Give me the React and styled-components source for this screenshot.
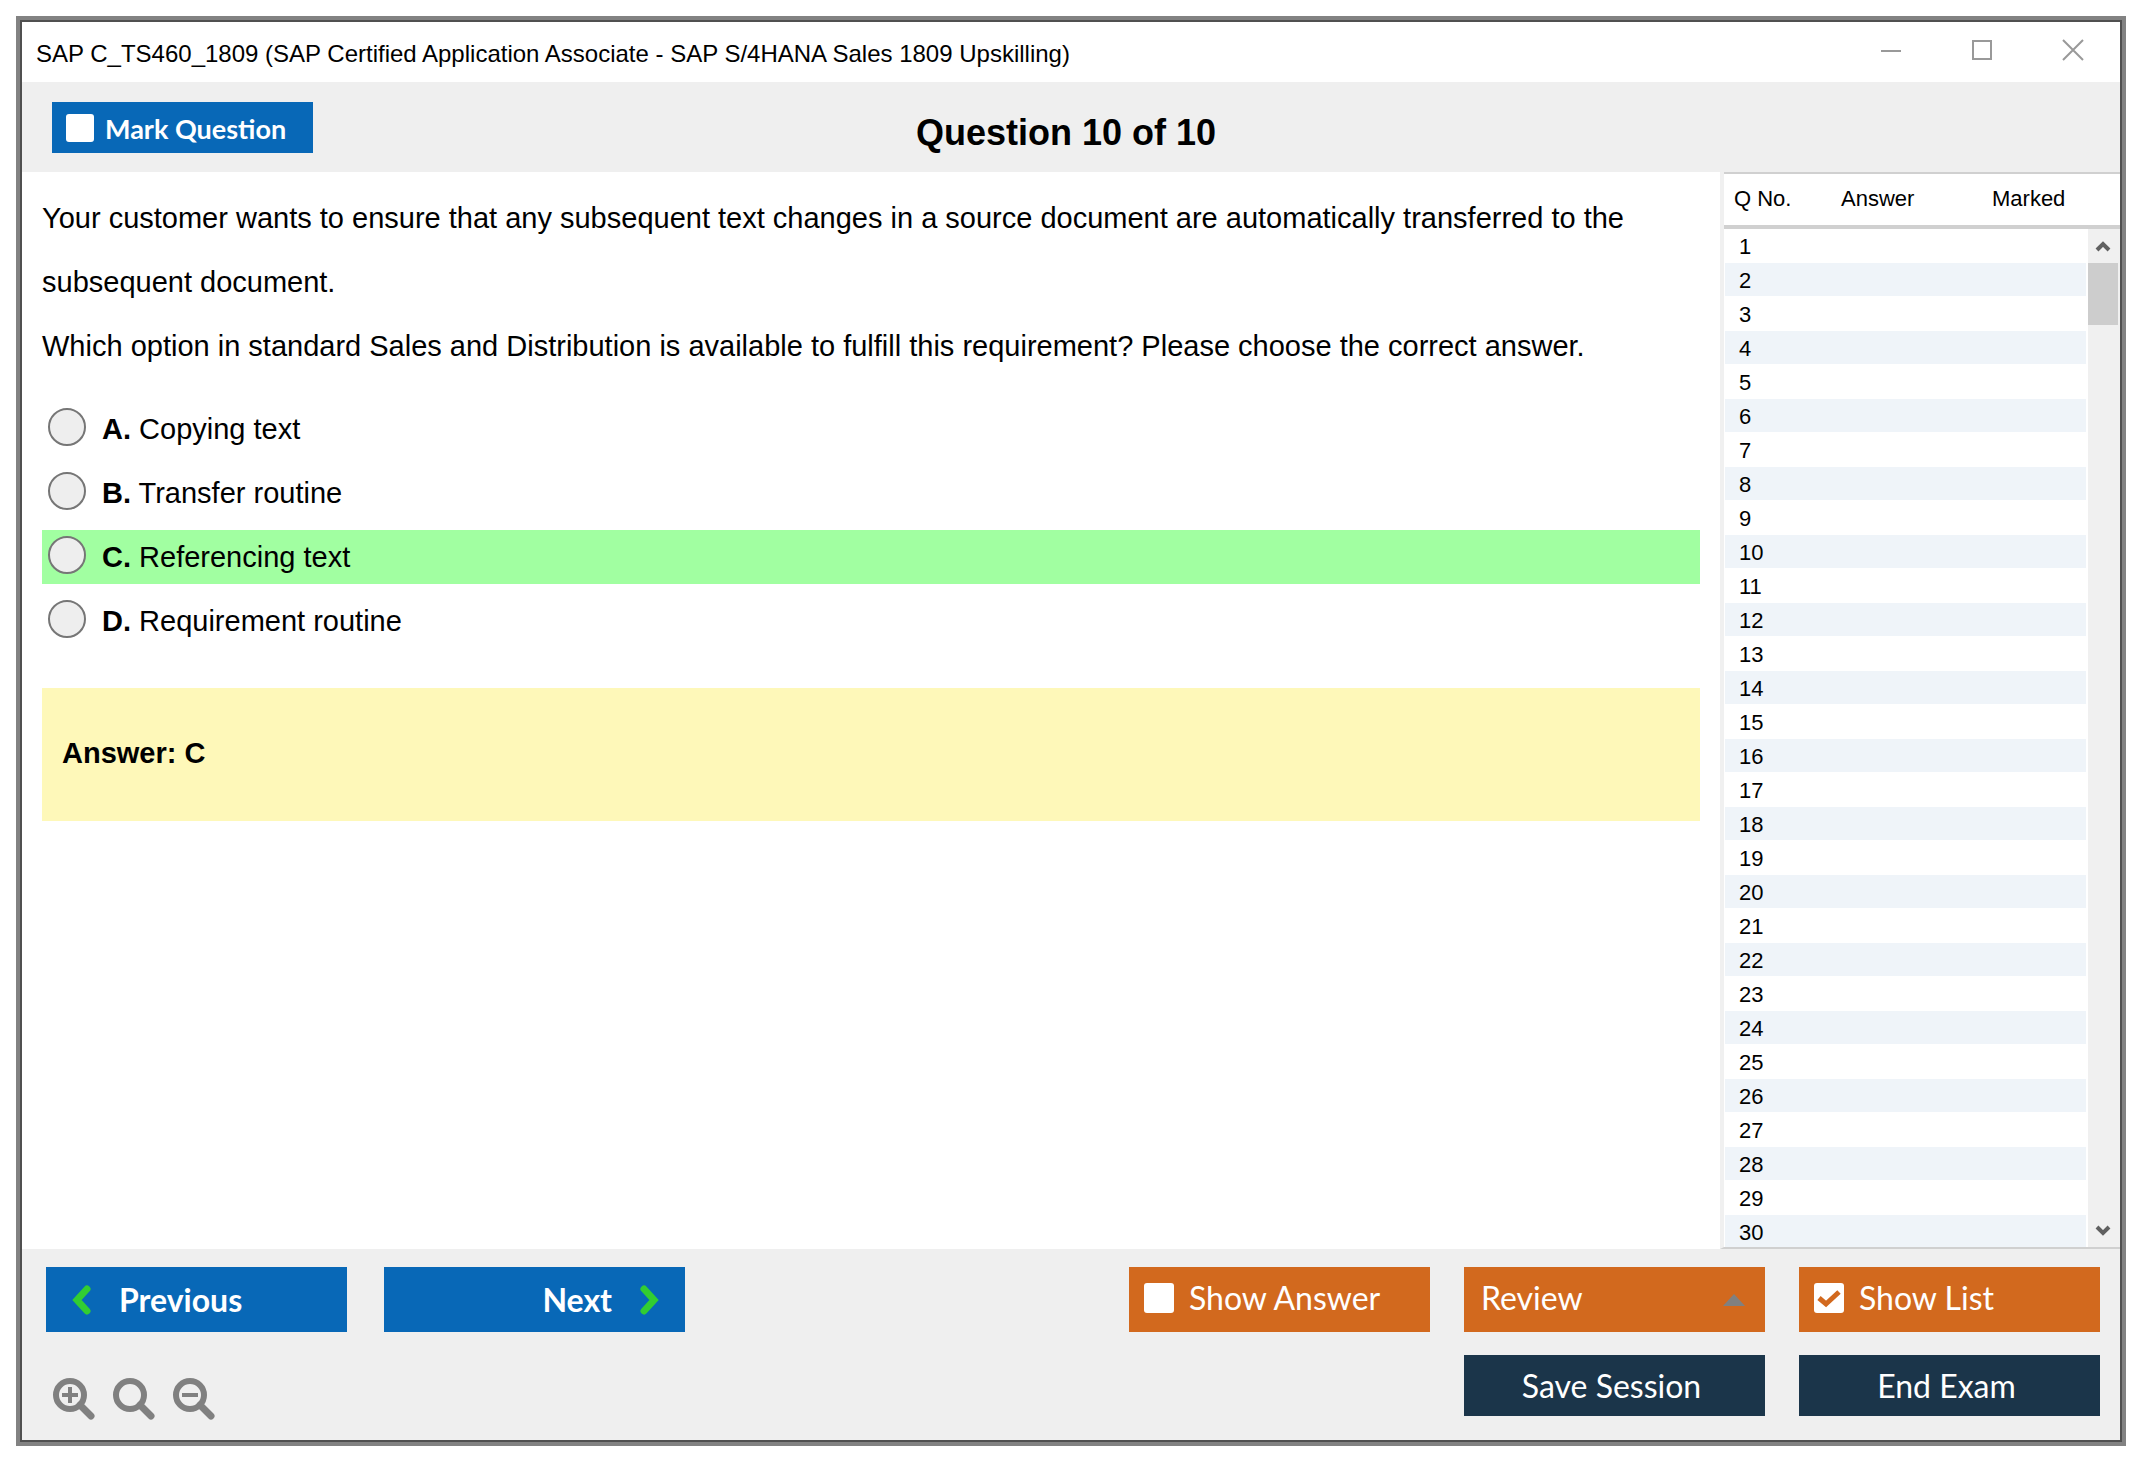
import { useState } from "react";
import styled, { createGlobalStyle } from "styled-components";

const options = [
    { letter: "A", text: "Copying text" },
    { letter: "B", text: "Transfer routine" },
    { letter: "C", text: "Referencing text" },
    { letter: "D", text: "Requirement routine" },
];

const correct = "C";

const rows = Array.from({ length: 30 }, (_, i) => i + 1);

export default function App(){
    const [marked, setMarked] = useState(false);
    const [showAnswer, setShowAnswer] = useState(false);
    const [showList, setShowList] = useState(true);

    return (
        <>
            <GlobalStyle />
            <Page>
                <Window>
                    <TitleBar>
                        <Title>SAP C_TS460_1809 (SAP Certified Application Associate - SAP S/4HANA Sales 1809 Upskilling)</Title>
                        <WindowControls>
                            <WindowButton aria-label="Minimize">
                                <svg width="22" height="22" viewBox="0 0 22 22"><path d="M1 12H21" /></svg>
                            </WindowButton>
                            <WindowButton aria-label="Maximize">
                                <svg width="22" height="22" viewBox="0 0 22 22"><path d="M2 2H20V20H2Z" /></svg>
                            </WindowButton>
                            <WindowButton aria-label="Close">
                                <svg width="22" height="22" viewBox="0 0 22 22"><path d="M1 1L21 21M21 1L1 21" /></svg>
                            </WindowButton>
                        </WindowControls>
                    </TitleBar>

                    <Header>
                        <MarkLabel>
                            <Check checked={marked} onChange={setMarked} />
                            Mark Question
                        </MarkLabel>
                        <Counter>Question 10 of 10</Counter>
                    </Header>

                    <Body>
                        <Content>
                            <Question>
                                Your customer wants to ensure that any subsequent text changes in a source document are automatically transferred to the subsequent document.
                                <br />
                                Which option in standard Sales and Distribution is available to fulfill this requirement? Please choose the correct answer.
                            </Question>
                            <Options>
                                {options.map(item => (
                                    <Option key={item.letter} $correct={item.letter === correct}>
                                        <Radio type="radio" name="option" value={item.letter} />
                                        <span><b>{item.letter}.</b> {item.text}</span>
                                    </Option>
                                ))}
                            </Options>
                            <AnswerBox>Answer: {correct}</AnswerBox>
                        </Content>

                        <ListPanel>
                            <Table>
                                <thead>
                                    <tr>
                                        <Th $width="107px">Q No.</Th>
                                        <Th $width="151px">Answer</Th>
                                        <Th>Marked</Th>
                                    </tr>
                                </thead>
                                <tbody>
                                    {rows.map(number => (
                                        <Row key={number}>
                                            <Td>{number}</Td>
                                            <Td />
                                            <Td />
                                        </Row>
                                    ))}
                                </tbody>
                            </Table>
                            <ScrollColumn>
                                <Corner />
                                <ScrollBar>
                                    <ScrollButton aria-label="Scroll up">
                                        <svg width="16" height="14" viewBox="0 0 16 14"><path d="M2 11L8 5L14 11" /></svg>
                                    </ScrollButton>
                                    <Thumb />
                                    <ScrollButton aria-label="Scroll down">
                                        <svg width="16" height="14" viewBox="0 0 16 14"><path d="M2 4L8 10L14 4" /></svg>
                                    </ScrollButton>
                                </ScrollBar>
                            </ScrollColumn>
                        </ListPanel>
                    </Body>

                    <Footer>
                        <FooterLeft>
                            <NavGroup>
                                <NavButton>
                                    <Chevron d="M15 4L5 15L15 26" />
                                    Previous
                                </NavButton>
                                <NavButton $end>
                                    Next
                                    <Chevron d="M5 4L15 15L5 26" />
                                </NavButton>
                            </NavGroup>
                            <ZoomGroup>
                                <ZoomButton label="Zoom in" sign="M10 17H26M18 9V25" />
                                <ZoomButton label="Reset zoom" />
                                <ZoomButton label="Zoom out" sign="M10 17H26" />
                            </ZoomGroup>
                        </FooterLeft>
                        <Actions>
                            <ActionLabel>
                                <Check checked={showAnswer} onChange={setShowAnswer} large />
                                Show Answer
                            </ActionLabel>
                            <SelectBox>
                                <Select aria-label="Review" defaultValue="Review">
                                    <option>Review</option>
                                </Select>
                                <Arrow width="22" height="12" viewBox="0 0 22 12"><path d="M0 12L11 0L22 12Z" /></Arrow>
                            </SelectBox>
                            <ActionLabel>
                                <Check checked={showList} onChange={setShowList} large />
                                Show List
                            </ActionLabel>
                            <SessionButton $column={2}>Save Session</SessionButton>
                            <SessionButton $column={3}>End Exam</SessionButton>
                        </Actions>
                    </Footer>
                </Window>
            </Page>
        </>
    );
}

function Check({ checked, onChange, large }){
    return (
        <CheckBox $size={large ? "30px" : "28px"}>
            <input type="checkbox" checked={checked} onChange={e => onChange(e.target.checked)} />
            {checked && <svg viewBox="0 0 30 30"><path d="M5 15L12 21L25 9" /></svg>}
        </CheckBox>
    );
}

function Chevron({ d }){
    return (
        <ChevronIcon width="20" height="30" viewBox="0 0 20 30">
            <path d={d} />
        </ChevronIcon>
    );
}

function ZoomButton({ label, sign }){
    return (
        <IconButton aria-label={label}>
            <svg width="44" height="44" viewBox="0 0 44 44">
                <circle cx="18" cy="17" r="14" strokeWidth="6" />
                <path d="M28 27L39 38" strokeWidth="7" strokeLinecap="round" />
                {sign && <path d={sign} strokeWidth="4" />}
            </svg>
        </IconButton>
    );
}

const GlobalStyle = createGlobalStyle`
    *{
        box-sizing:border-box;
    }

    body{
        margin:0;
        background:#fff;
        color:#000;
        font-family:"Liberation Sans", Arial, sans-serif;
    }

    button, select, input{
        margin:0;
        padding:0;
        border:none;
        font-family:inherit;
    }

    svg{
        display:block;
    }
`;

const Page = styled.div`
    height:100vh;
    min-height:900px;

    display:flex;

    padding:16px 24px 24px 16px;
`;

const Window = styled.main`
    flex:1;
    min-width:0;

    display:flex;
    flex-direction:column;

    border:4px solid #828282;
    outline:2px solid #505050;
    outline-offset:-6px;
    padding:2px;
`;

const TitleBar = styled.div`
    height:60px;

    display:flex;
    justify-content:space-between;
    align-items:center;

    padding:0 36px 0 14px;
`;

const Title = styled.h1`
    margin:0;
    padding-top:4px;

    font-weight:400;
    font-size:24px;
    line-height:28px;
`;

const WindowControls = styled.div`
    display:flex;
    gap:69px;

    padding-bottom:4px;
`;

const WindowButton = styled.button`
    background:none;

    path{
        fill:none;
        stroke:#999;
        stroke-width:2;
    }
`;

const Header = styled.header`
    height:90px;

    display:grid;
    grid-template-columns:1fr auto 1fr;
    align-items:center;

    padding:0 40px 0 30px;
    background:#efefef;
`;

const MarkLabel = styled.label`
    width:261px;
    height:51px;

    display:flex;
    align-items:center;
    gap:11px;

    padding:2px 0 0 14px;
    background:#0868b7;
    color:#fff;
    font-family:Lato, sans-serif;
    font-weight:700;
    font-size:27px;
`;

const CheckBox = styled.span`
    width:${props => props.$size};
    height:${props => props.$size};

    display:grid;

    input, svg{
        grid-area:1 / 1;
        width:100%;
        height:100%;
    }

    input{
        appearance:none;
        background:#fff;
        border-radius:3px;
    }

    svg{
        pointer-events:none;
    }

    path{
        fill:none;
        stroke:#d2691e;
        stroke-width:5;
    }
`;

const Counter = styled.h2`
    margin:0;
    padding-top:12px;

    font-weight:700;
    font-size:36px;
    line-height:40px;
`;

const Body = styled.div`
    flex:1;
    min-height:0;

    display:flex;
`;

const Content = styled.section`
    flex:1;
    min-width:0;

    padding:14px 20px;
    font-size:29px;
`;

const Question = styled.p`
    margin:0 0 24px;

    line-height:64px;
`;

const Options = styled.div`
    display:flex;
    flex-direction:column;
    gap:10px;
`;

const Option = styled.label`
    height:54px;

    display:flex;
    align-items:center;
    gap:16px;

    padding:0 6px;
    background:${props => props.$correct ? "#a1ffa1" : "none"};
`;

const Radio = styled.input`
    appearance:none;
    width:38px;
    height:38px;

    && {
        margin-bottom:4px;
        border:2px solid #767676;
    }
    border-radius:50%;
    background:#eee;
`;

const AnswerBox = styled.div`
    margin-top:40px;
    padding:47px 20px 49px;

    background:#fef8b9;
    font-weight:700;
    line-height:37px;
`;

const ListPanel = styled.aside`
    width:400px;

    display:flex;
    align-items:flex-start;

    overflow:hidden;
    border-left:4px solid #f0f0f0;
    border-bottom:2px solid #d0d0d0;
`;

const Table = styled.table`
    flex:1;

    table-layout:fixed;
    border-spacing:0;
    font-size:22px;
    line-height:26px;
`;

const Th = styled.th`
    width:${props => props.$width};
    height:57px;

    padding:0 0 2px 10px;
    border-top:2px solid #d0d0d0;
    border-bottom:4px solid #d0d0d0;
    font-weight:400;
    text-align:left;
`;

const Row = styled.tr`
    &:nth-child(even){
        background:#eff4f9;
    }
`;

const Td = styled.td`
    height:34px;

    padding:2px 0 0 14px;
    border-bottom:1px solid #fff;

    &:first-child{
        border-left:1px solid #fff;
    }

    &:last-child{
        border-right:2px solid #fff;
    }
`;

const ScrollColumn = styled.div`
    width:32px;

    display:flex;
    flex-direction:column;
    align-self:stretch;
`;

const Corner = styled.div`
    height:57px;

    border-top:2px solid #d0d0d0;
    border-bottom:4px solid #d0d0d0;
`;

const ScrollBar = styled.div`
    flex:1;

    display:flex;
    flex-direction:column;

    padding-right:2px;
    background:#f0f0f0;
`;

const ScrollButton = styled.button`
    height:34px;

    display:flex;
    justify-content:center;
    align-items:center;

    background:none;

    path{
        fill:none;
        stroke:#606060;
        stroke-width:4;
    }
`;

const Thumb = styled.div`
    height:62px;

    margin-bottom:auto;
    background:#cdcdcd;
`;

const Footer = styled.footer`
    height:191px;

    display:flex;
    justify-content:space-between;

    padding:18px 20px 0 24px;
    background:#efefef;
`;

const FooterLeft = styled.div`
    display:flex;
    flex-direction:column;
    gap:46px;
`;

const NavGroup = styled.div`
    display:flex;
    gap:37px;
`;

const NavButton = styled.button`
    width:301px;
    height:65px;

    display:flex;
    justify-content:${props => props.$end ? "flex-end" : "flex-start"};
    align-items:center;
    gap:27px;

    && {
        padding:0 26px;
    }
    background:#0868b7;
    color:#fff;
    font-family:Lato, sans-serif;
    font-weight:700;
    font-size:32px;
`;

const ChevronIcon = styled.svg`
    fill:none;
    stroke:#32cd32;
    stroke-width:7;
    stroke-linecap:round;
`;

const ZoomGroup = styled.div`
    display:flex;
    gap:16px;

    padding-left:6px;
`;

const IconButton = styled.button`
    background:none;

    svg{
        fill:none;
        stroke:#808080;
    }
`;

const Actions = styled.div`
    display:grid;
    grid-template-columns:repeat(3, 301px);
    grid-template-rows:65px 61px;
    gap:23px 34px;

    color:#fff;
    font-family:Lato, sans-serif;
    font-size:32px;
`;

const ActionLabel = styled.label`
    display:flex;
    align-items:center;
    gap:15px;

    padding:0 15px 4px;
    background:#d2691e;
`;

const SelectBox = styled.div`
    display:grid;
    align-items:center;

    background:#d2691e;
`;

const Select = styled.select`
    grid-area:1 / 1;
    appearance:none;
    width:100%;
    height:65px;

    && {
        padding:0 17px 4px;
    }
    background:none;
    color:#fff;
    font-size:32px;
`;

const Arrow = styled.svg`
    grid-area:1 / 1;
    justify-self:end;

    margin-right:20px;
    fill:#808080;
    pointer-events:none;
`;

const SessionButton = styled.button`
    grid-column:${props => props.$column};

    && {
        padding-right:6px;
    }
    background:#1b354a;
    color:#fff;
    font-size:32px;
`;
